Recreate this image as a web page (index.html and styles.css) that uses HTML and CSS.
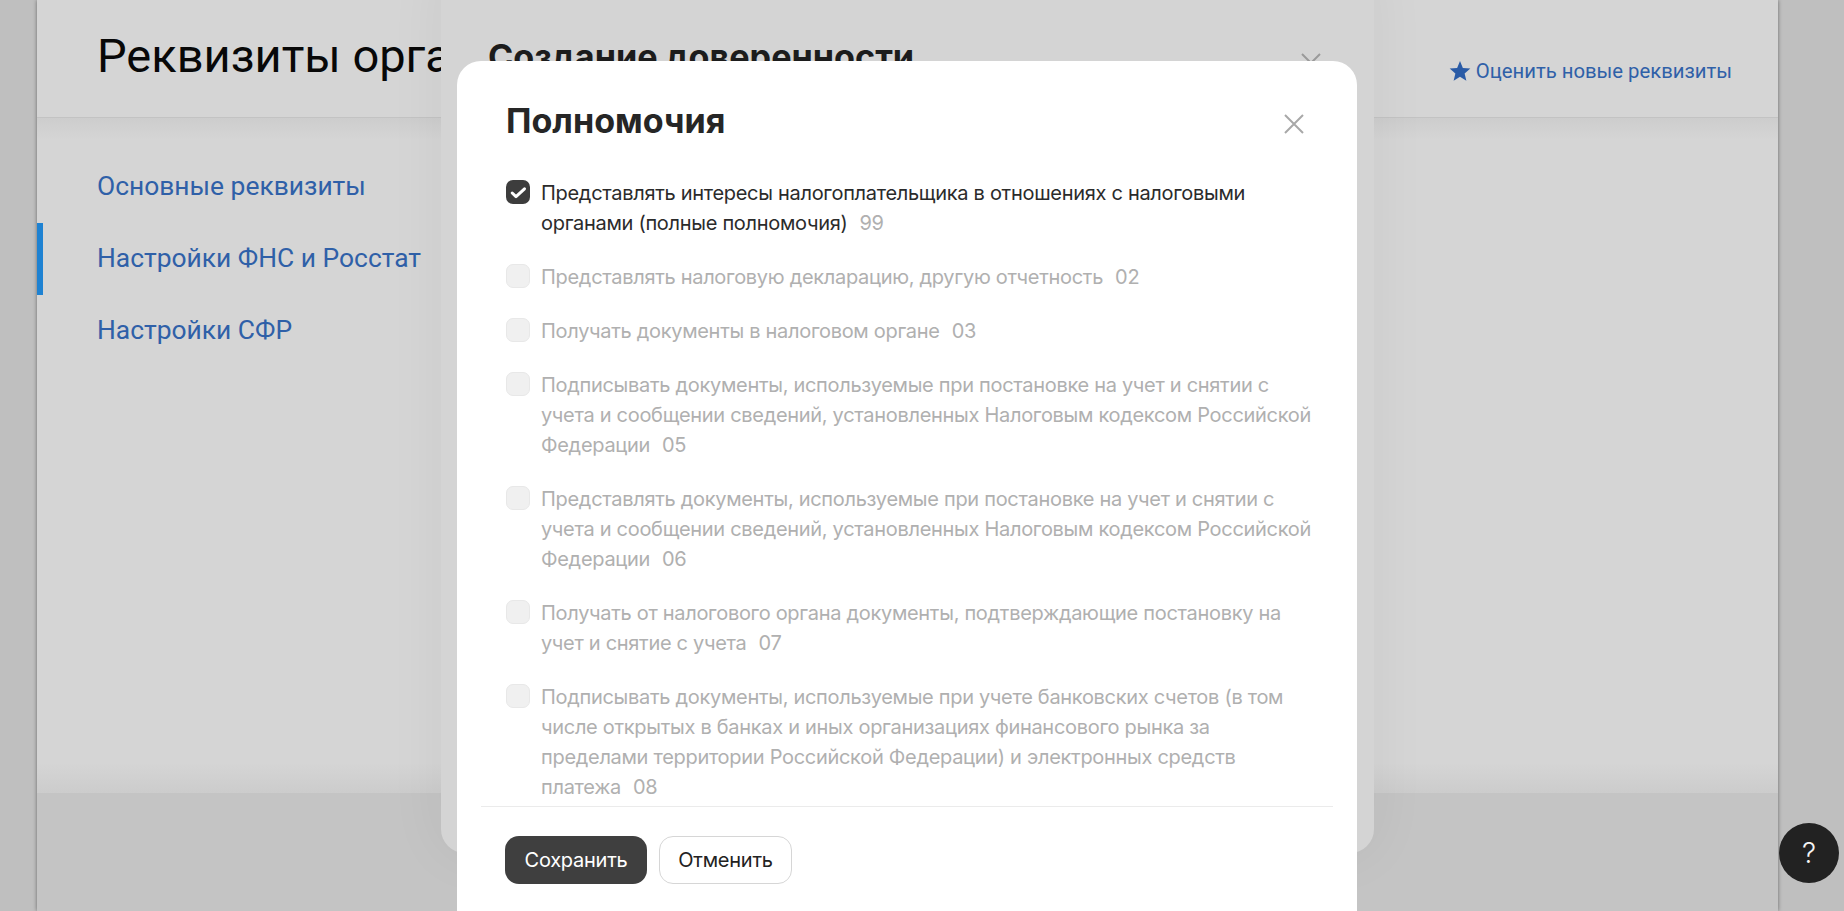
FILE: index.html
```
<!DOCTYPE html>
<html lang="ru">
<head>
<meta charset="utf-8">
<title>Реквизиты организации</title>
<link rel="stylesheet" href="styles.css">
</head>
<body>
<div class="page">
  <header class="page-head">
    <h1 class="page-title">Реквизиты организации</h1>
    <a class="rate-link"><svg class="star" viewBox="0 0 20 20" width="22" height="22"><path d="M10 1l2.6 6.3 6.8.5-5.2 4.4 1.6 6.6L10 15.3l-5.8 3.5 1.6-6.6L.6 7.8l6.8-.5z"/></svg>Оценить новые реквизиты</a>
  </header>
  <main class="page-main">
    <nav class="side-nav">
      <a class="nav-item">Основные реквизиты</a>
      <a class="nav-item active">Настройки ФНС и Росстат</a>
      <a class="nav-item">Настройки СФР</a>
    </nav>
  </main>
  <footer class="page-foot"></footer>
</div>

<section class="back-modal">
  <h2 class="back-title">Создание доверенности</h2>
  <svg class="back-close" viewBox="0 0 20 20" width="20" height="20"><path d="M1 1l18 18M19 1L1 19"/></svg>
</section>

<section class="modal">
  <div class="modal-head">
    <h2 class="modal-title">Полномочия</h2>
    <svg class="modal-close" viewBox="0 0 20 20" width="20" height="20"><path d="M1 1l18 18M19 1L1 19"/></svg>
  </div>
  <div class="modal-list">
    <div class="row">
      <span class="box checked"><svg viewBox="0 0 24 24" width="24" height="24"><path d="M6.2 13l3.8 3.6 8.5-7.8"/></svg></span>
      <p class="label">Представлять интересы налогоплательщика в отношениях с налоговыми органами (полные полномочия)<span class="code">99</span></p>
    </div>
    <div class="row off">
      <span class="box"></span>
      <p class="label">Представлять налоговую декларацию, другую отчетность<span class="code">02</span></p>
    </div>
    <div class="row off">
      <span class="box"></span>
      <p class="label">Получать документы в налоговом органе<span class="code">03</span></p>
    </div>
    <div class="row off">
      <span class="box"></span>
      <p class="label">Подписывать документы, используемые при постановке на учет и снятии с учета и сообщении сведений, установленных Налоговым кодексом Российской Федерации<span class="code">05</span></p>
    </div>
    <div class="row off">
      <span class="box"></span>
      <p class="label">Представлять документы, используемые при постановке на учет и снятии с учета и сообщении сведений, установленных Налоговым кодексом Российской Федерации<span class="code">06</span></p>
    </div>
    <div class="row off">
      <span class="box"></span>
      <p class="label">Получать от налогового органа документы, подтверждающие постановку на учет и снятие с учета<span class="code">07</span></p>
    </div>
    <div class="row off">
      <span class="box"></span>
      <p class="label">Подписывать документы, используемые при учете банковских счетов (в том числе открытых в банках и иных организациях финансового рынка за пределами территории Российской Федерации) и электронных средств платежа<span class="code">08</span></p>
    </div>
  </div>
  <div class="modal-foot">
    <button class="btn primary">Сохранить</button>
    <button class="btn ghost">Отменить</button>
  </div>
</section>

<button class="help">?</button>
</body>
</html>
```
FILE: styles.css
```
* { box-sizing: border-box; }
html, body { margin: 0; height: 100%; overflow: hidden; }
body { background: #bfbfbf; font-family: Roboto, "Liberation Sans", sans-serif; position: relative; }
h1, h2, p { margin: 0; }

.page {
  width: 1741px; height: 911px; margin-left: 37px;
  display: flex; flex-direction: column;
  background: #d5d5d5;
  box-shadow: 0 0 4px rgba(0,0,0,.45);
}
.page-head {
  height: 118px; flex: none; padding: 0 46px 0 60px;
  display: flex; justify-content: space-between; align-items: center;
  border-bottom: 1px solid #c3c3c3;
}
.page-title { font-size: 47px; font-weight: 400; color: #080808; white-space: nowrap; position: relative; top: -3px; }
.rate-link { display: flex; align-items: center; gap: 5px; font-size: 20.3px; font-weight: 400; color: #2f60a8; position: relative; top: 12px; }
.star { fill: #2a5ba6; }
.page-main {
  flex: 1; padding-top: 33px;
  background:
    linear-gradient(#cdcdcd, #d5d5d5 22px) top / 100% 22px no-repeat,
    linear-gradient(#d5d5d5, #cccccc) bottom / 100% 30px no-repeat;
}
.side-nav { display: flex; flex-direction: column; }
.nav-item {
  height: 72px; display: flex; align-items: center;
  padding: 0 0 2px 60px;
  font-size: 26.4px; font-weight: 400; color: #2f60a8;
}
.nav-item.active { box-shadow: inset 6px 0 0 #1e82d2; }
.page-foot { height: 118px; flex: none; background: #c4c4c4; }

.back-modal {
  position: absolute; left: 441px; top: -40px; width: 933px; height: 893px;
  background: #d4d4d4; border-radius: 24px;
  box-shadow: 0 0 60px rgba(0,0,0,.05);
  padding: 76px 47px 0;
}
.back-title { font-family: Inter, sans-serif; font-size: 34.2px; font-weight: 700; color: #1c1c1c; }
.back-close { position: absolute; right: 53px; top: 93px; fill: none; stroke: #9a9a9a; stroke-width: 2; }

.modal {
  position: absolute; left: 457px; top: 61px; width: 900px; height: 881px;
  background: #fff; border-radius: 24px;
  display: flex; flex-direction: column;
  font-family: Inter, sans-serif;
}
.modal-head {
  height: 117px; flex: none; padding: 0 53px 0 49px;
  display: flex; justify-content: space-between; align-items: flex-start;
}
.modal-title { font-size: 34.1px; font-weight: 700; color: #262626; line-height: 42px; margin-top: 39px; }
.modal-close { margin-top: 53px; fill: none; stroke: #a8a8a8; stroke-width: 2; }
.modal-list {
  height: 628px; flex: none; overflow: hidden; padding: 0 36px 0 48px;
  display: flex; flex-direction: column; gap: 24px;
}
.row { display: flex; gap: 11px; flex: none; }
.box {
  width: 24px; height: 24px; flex: none; margin: 2px 0 0 1px;
  border-radius: 7px; background: #f0f0f0; border: 1px solid #e8e8e8;
}
.box.checked { background: #3d3d3d; border: 0; }
.box svg { display: block; fill: none; stroke: #fff; stroke-width: 3; stroke-linecap: round; stroke-linejoin: round; }
.label { font-size: 20px; line-height: 30px; letter-spacing: -0.3px; color: #2b2b2b; }
.code { color: #b0b0b0; margin-left: 12px; }
.off .label { color: #b0b0b0; }
.modal-foot {
  margin: 0 24px; padding: 29px 24px 0;
  border-top: 1px solid #ebebeb;
  display: flex; gap: 12px;
}
.btn { height: 48px; border-radius: 14px; font-family: Inter, sans-serif; font-size: 20px; letter-spacing: -0.25px; padding: 0; }
.primary { width: 142px; background: #3f3f3f; color: #fff; border: 0; }
.ghost { width: 133px; background: #fff; color: #222; border: 1px solid #d6d6d6; }

.help {
  position: absolute; left: 1779px; top: 823px; width: 60px; height: 60px;
  border-radius: 50%; border: 0; background: #222; color: #f4f4f4;
  font-family: Inter, sans-serif; font-size: 28px; font-weight: 300; padding: 0;
}
```
